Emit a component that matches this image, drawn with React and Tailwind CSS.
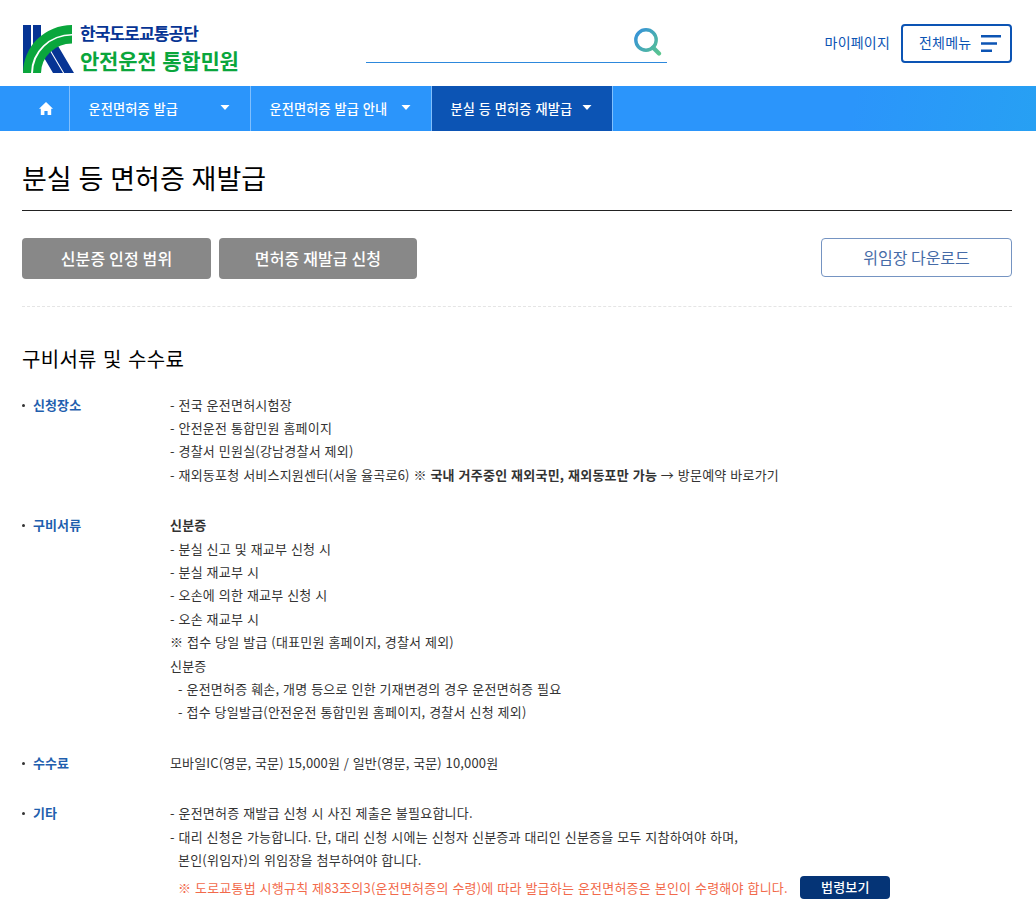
const navItems = [
  { label: '운전면허증 발급', active: false },
  { label: '운전면허증 발급 안내', active: false },
  { label: '분실 등 면허증 재발급', active: true },
];

function LogoMark() {
  return (
    <svg width="51" height="48" viewBox="0 0 51 48" className="shrink-0">
      <path d="M0 0H8V24L0 48ZM10 0H18V12L10 21Z" fill="#063494" />
      <path d="M20 31L25.8 24L40 48H30ZM27 24L33 17.5L51 48H41.2Z" fill="#063494" />
      <path d="M0 48A49 48 0 0 1 49 0V9A41 39 0 0 0 8 48Z" fill="#0aa63c" />
      <path d="M10 48A39 37.5 0 0 1 49 10.5V18.5A31 29.5 0 0 0 18 48Z" fill="#0aa63c" />
    </svg>
  );
}

function SearchIcon() {
  return (
    <svg width="28" height="28" viewBox="0 0 28 28" fill="none">
      <defs>
        <linearGradient id="searchGrad" x1="0" y1="4" x2="28" y2="26" gradientUnits="userSpaceOnUse">
          <stop stopColor="#3490dc" />
          <stop offset="1" stopColor="#5cc88a" />
        </linearGradient>
      </defs>
      <circle cx="12" cy="12" r="10.2" stroke="url(#searchGrad)" strokeWidth="3.4" />
      <path d="M19 19.5L25 25.5" stroke="url(#searchGrad)" strokeWidth="4.2" strokeLinecap="round" />
    </svg>
  );
}

function Header() {
  return (
    <header className="flex h-[86px] items-start pl-[23px] pr-6">
      <a href="#" className="mt-[25px] flex w-[343px] gap-[6px]">
        <LogoMark />
        <span className="flex flex-col whitespace-nowrap font-bold">
          <span className="-mt-[2px] text-[17px] leading-[20px] tracking-[-0.9px] text-[#063494]">한국도로교통공단</span>
          <span className="mt-[4px] text-[21px] leading-[26px] tracking-[-0.25px] [word-spacing:1.5px] text-[#0aa63c]">안전운전 통합민원</span>
        </span>
      </a>
      <div className="flex h-[63px] w-[301px] items-end justify-end border-b border-[#2d88dc] pb-[6px] pr-[5px]">
        <SearchIcon />
      </div>
      <div className="ml-auto mt-6 flex h-[39px] items-center gap-[11px] text-[14px] tracking-[0.2px] text-[#0c54b4]">
        <a href="#" className="pb-[2px]">마이페이지</a>
        <button className="flex h-[39px] w-[111px] items-center gap-[10px] rounded-[4px] border-2 border-[#0c54b4] pl-4">
          <span className="pb-[2px]">전체메뉴</span>
          <svg width="20" height="17" viewBox="0 0 20 17" fill="#0c54b4">
            <path d="M0 0H20V2.6H0ZM0 7.2H16V9.8H0ZM0 14.4H11V17H0Z" />
          </svg>
        </button>
      </div>
    </header>
  );
}

function Navigation() {
  return (
    <nav className="flex h-[45px] bg-linear-[100deg] from-[#2b95fb] from-82% to-[#27a0f3] text-[13.2px] font-medium tracking-[0.12px] [word-spacing:0.7px] text-white">
      <a href="#" className="flex w-[70px] items-center justify-end border-r border-[#80bffd] pr-4">
        <svg width="14" height="13" viewBox="0 0 14 13" fill="#fff">
          <path d="M7 0L14 6.8H12.2V13H8.6V9H5.4V13H1.8V6.8H0Z" />
        </svg>
      </a>
      {navItems.map((item) => (
        <a
          key={item.label}
          href="#"
          className={`flex w-[181px] items-center justify-between border-r border-[#80bffd] pl-[18.5px] pr-[20px] ${item.active ? 'bg-[#0c54b4]' : ''}`}
        >
          {item.label}
          <svg width="10" height="5" viewBox="0 0 10 5" className="-mt-[2px]">
            <path d="M0.5 0H9.5L5 5Z" fill="#fff" />
          </svg>
        </a>
      ))}
    </nav>
  );
}

function Row({ title, children }) {
  return (
    <div className="flex">
      <dt className="flex w-[148px] shrink-0 font-bold tracking-[0.1px] text-[#1f5fae]">
        <span className="mr-[8px] mt-[11px] size-[3px] rounded-full bg-[#333]" />
        {title}
      </dt>
      <dd className="whitespace-nowrap">{children}</dd>
    </div>
  );
}

export default function App() {
  return (
    <div className="h-[903px] w-[1036px] overflow-hidden bg-white font-['Noto_Sans_CJK_KR',sans-serif] text-[#333]">
      <Header />
      <Navigation />
      <main className="pl-[22px] pr-6">
        <h1 className="flex h-[80px] items-center border-b border-[#222] pt-[15px] text-[27px] [word-spacing:0.8px] text-black">
          분실 등 면허증 재발급
        </h1>
        <div className="flex h-[96px] items-start border-b border-dashed border-[#e5e5e5] pt-[27px] [word-spacing:1px]">
          <button className="h-[41px] w-[189px] rounded-[4px] bg-[#888] pb-[2px] text-[16px] font-medium tracking-[0.15px] text-white">신분증 인정 범위</button>
          <button className="ml-2 h-[41px] w-[198px] rounded-[4px] bg-[#888] pb-[2px] text-[16px] font-medium tracking-[0.15px] text-white">면허증 재발급 신청</button>
          <button className="ml-auto h-[39px] w-[191px] rounded-[4px] border border-[#7594c2] pb-[2px] text-[16px] text-[#466ba7]">위임장 다운로드</button>
        </div>

        <h2 className="mt-[36px] text-[20px] leading-[32px] tracking-[0.3px] [word-spacing:1.5px] text-black">구비서류 및 수수료</h2>

        <dl className="mt-[17.5px] flex flex-col gap-[27px] text-[13px] leading-[23.4px] tracking-[0.22px] [word-spacing:0.62px]">
          <Row title="신청장소">
            <p>- 전국 운전면허시험장</p>
            <p>- 안전운전 통합민원 홈페이지</p>
            <p>- 경찰서 민원실(강남경찰서 제외)</p>
            <p>- 재외동포청 서비스지원센터(서울 율곡로6) ※ <b>국내 거주중인 재외국민, 재외동포만 가능</b> → 방문예약 바로가기</p>
          </Row>
          <Row title="구비서류">
            <p><b>신분증</b></p>
            <p>- 분실 신고 및 재교부 신청 시</p>
            <p>- 분실 재교부 시</p>
            <p>- 오손에 의한 재교부 신청 시</p>
            <p>- 오손 재교부 시</p>
            <p>※ 접수 당일 발급 (대표민원 홈페이지, 경찰서 제외)</p>
            <p>신분증</p>
            <p className="pl-2">- 운전면허증 훼손, 개명 등으로 인한 기재변경의 경우 운전면허증 필요</p>
            <p className="pl-2">- 접수 당일발급(안전운전 통합민원 홈페이지, 경찰서 신청 제외)</p>
          </Row>
          <Row title="수수료">
            <p className="tracking-[0.15px]">모바일IC(영문, 국문) 15,000원 / 일반(영문, 국문) 10,000원</p>
          </Row>
          <Row title="기타">
            <p>- 운전면허증 재발급 신청 시 사진 제출은 불필요합니다.</p>
            <p>- 대리 신청은 가능합니다. 단, 대리 신청 시에는 신청자 신분증과 대리인 신분증을 모두 지참하여야 하며,</p>
            <p className="pl-2">본인(위임자)의 위임장을 첨부하여야 합니다.</p>
            <p className="mt-[3.5px] flex items-center pl-2 text-[#f26a4b]">
              <span className="pt-[1px]">※ 도로교통법 시행규칙 제83조의3(운전면허증의 수령)에 따라 발급하는 운전면허증은 본인이 수령해야 합니다.</span>
              <a href="#" className="ml-[12.5px] h-[23px] w-[90px] rounded-[4px] bg-[#053476] text-center font-medium leading-[22px] text-white">법령보기</a>
            </p>
          </Row>
        </dl>
      </main>
    </div>
  );
}
